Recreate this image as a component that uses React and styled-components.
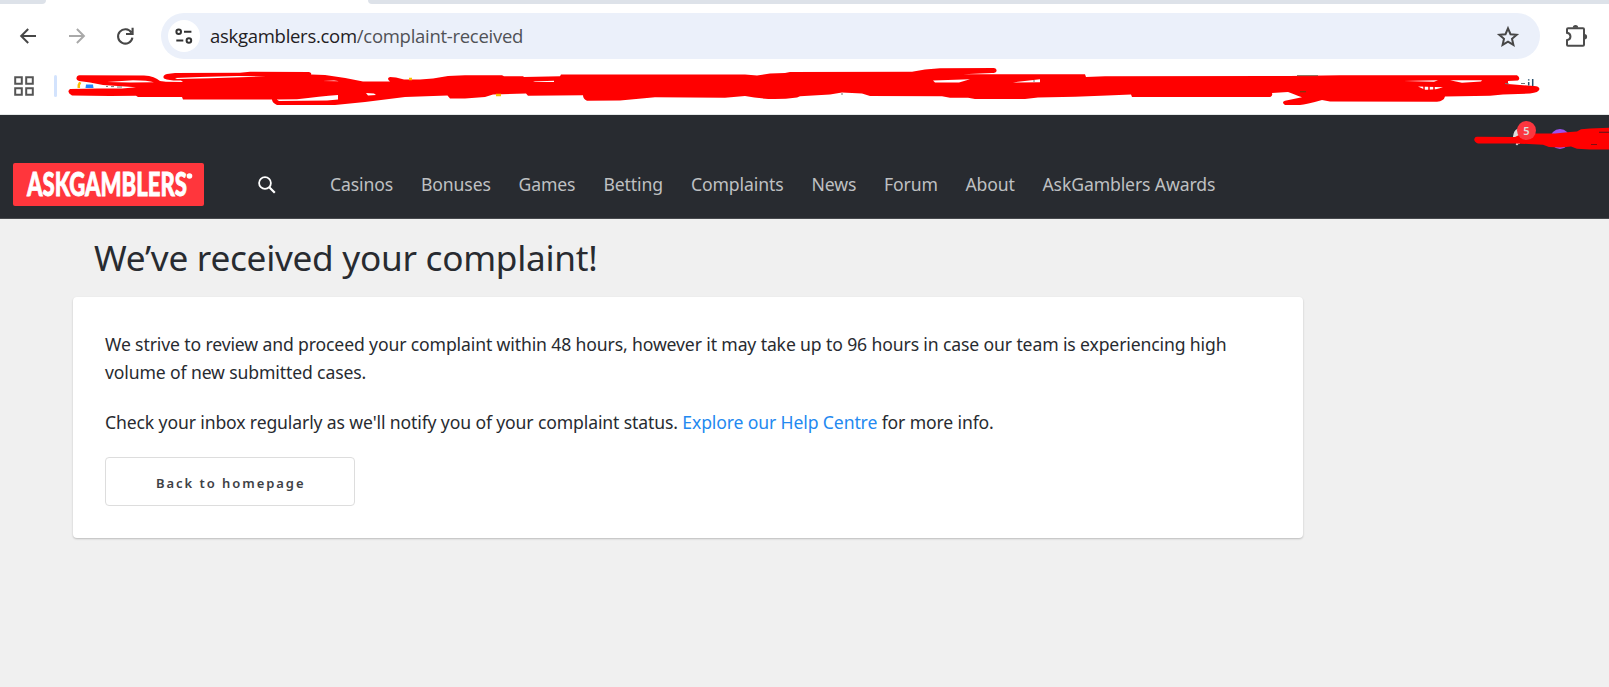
import React from "react"
import styled, { createGlobalStyle } from "styled-components"

const links = [
  { name: "Casinos", width: 91 },
  { name: "Bonuses", width: 97.5 },
  { name: "Games", width: 85 },
  { name: "Betting", width: 87.5 },
  { name: "Complaints", width: 120.5 },
  { name: "News", width: 72.5 },
  { name: "Forum", width: 81.5 },
  { name: "About", width: 77 },
  { name: "AskGamblers Awards", width: 180 },
]

function BrowserBar() {
  return (
    <div>
      <TabStrip>
        <TabEdge $width="46px" $radius="0 0 6px 0" />
        <TabEdge $width="1241px" $radius="0 0 0 6px" />
      </TabStrip>
      <Toolbar>
        <NavButtons>
          <svg width="17" height="16" viewBox="0 0 17 16" fill="none" stroke="#474747" strokeWidth="2">
            <path d="M16 8H1.4M8.2 1L1.2 8l7 7" />
          </svg>
          <svg width="17" height="16" viewBox="0 0 17 16" fill="none" stroke="#a9a9a9" strokeWidth="2">
            <path d="M0 8h14.7M7.9 1l7 7-7 7" />
          </svg>
          <svg width="18" height="18" viewBox="0 0 18 18" fill="none" stroke="#474747" strokeWidth="2.1">
            <path d="M14.4 5.6A7.2 7.2 0 1 0 15.4 10.6M15.6 0.8v6.2H9" />
          </svg>
        </NavButtons>
        <AddressBar>
          <SiteInfo>
            <svg width="18" height="16" viewBox="0 0 18 16" fill="none" stroke="#333" strokeWidth="2">
              <circle cx="3.7" cy="3.7" r="2.3" />
              <path d="M9 3.7h7.4M1.3 12.5h7" />
              <circle cx="13.9" cy="12.5" r="2.3" />
            </svg>
          </SiteInfo>
          <Url>askgamblers.com<span>/complaint-received</span></Url>
          <svg width="22" height="21" viewBox="0 0 22 21" fill="none" stroke="#474747" strokeWidth="2">
            <path d="M12 2.4l2.5 5.8 6.2.5-4.7 4.1 1.4 6.1-5.4-3.2-5.4 3.2 1.4-6.1-4.7-4.1 6.2-.5z" />
          </svg>
        </AddressBar>
        <svg width="24" height="24" viewBox="0 0 24 24" fill="none" stroke="#4c4c4c" strokeWidth="2">
          <path d="M4 4.2h15a1 1 0 0 1 1 1v15.6a1 1 0 0 1-1 1H4a1 1 0 0 1-1-1v-4.6c4.6-.8 4.6-6.6 0-7.4V5.2a1 1 0 0 1 1-1z" />
          <path d="M8.8 3.8a2.7 2.7 0 0 1 5.4 0zM20.4 10a2.7 2.7 0 0 1 0 5.4z" fill="#4c4c4c" stroke="none" />
        </svg>
      </Toolbar>
      <Bookmarks>
        <svg width="20" height="20" viewBox="0 0 20 20" fill="none" stroke="#555" strokeWidth="2">
          <path d="M1.2 1.2h6.6v6.6H1.2zM12.2 1.2h6.6v6.6h-6.6zM1.2 12.2h6.6v6.6H1.2zM12.2 12.2h6.6v6.6h-6.6z" />
        </svg>
        <Divider />
      </Bookmarks>
    </div>
  )
}

// freehand marker strokes lying over the bookmarks and the account area
function Marker() {
  return (
    <MarkerLayer width="1609" height="90" viewBox="0 65 1609 90">
      <path
        fill="#f00"
        d="M76.5 78Q77 75 80 75.3L144 75.4Q155 76 160 81L166 81.7 183 82 181 80.5Q170 81 164 78.5Q162 75.5 167 74L175 73 240 72.8 250 71.8 309 72Q312 73 311 74.6L325 75Q345 77.5 363 81.6L390 81.6Q386 78 390 77L396 77.5 404 79.5 420 79.5 433 78.5 448 76 465 75.3 502 75.3 504 76.3 523 76.3 524 77 560 76.3 561 74.5 745 74.5 757 75.5 770 73.6 785 73 790 71.9 912 71.8 925 69.6 940 68.2 994 68Q997 68.5 996.5 71Q996 73 992 73L963 74.3 1085 74.3 1086 77 1105 76.2 1290 76 1340 75.3 1517 75.3Q1521 78 1518 80.6L1508 81 1508 84 1534 86Q1539 86 1539.5 89Q1539 92.5 1530 93.5L1503 94.5 1490 95.8 1445 96.5Q1444 101 1437 101.8L1330 101.5 1322 100Q1306 104.7 1300 105L1285 105Q1281 102 1285 100.7L1302 97.3Q1293 94 1288 92L1272 93Q1273 96 1270 97L1132 97 1131 94.5 1107 95.5 1075 96.7 1038 97.5 1025 99 975 99 968 97.8 950 97.8 942 96.3 870 96 862 93.5 842 92.5 830 94.5 800 96.3 797 97.4Q770 101 745 96L725 97.8 655 97.3 620 100.5 587 100.8Q583 99 583 95.3L528 95.8 526 93.5 493 94.5 485 97 465 98.6 450 98.6 447.5 95.5 405 97 365 102 335 105 277 105Q272 103 272 99.6L183 99.6 182 97 138 97 136 95.7 110 96 72 95.5Q66 92 70 89L98 88.6 122 88.4 136 87.2 103 85 90 82.4 79 81Q76 80 76.5 78Z"
      />
      <path
        fill="#fff"
        d="M107 82L133 80.3Q148 80.5 154 82.2L130 82.4zM175 78L200 77 237 76 266 76.3 210 78.2 177 79zM323 81L334 80.5 340 81.2zM276.7 99.6L297 99.3Q320 96.5 338 95L338 99.4 327 100.5 279 101zM366 93L374 93.5 376 95 368 95.5zM533 81.6L554 80.8 554 82 535 82zM933 80.6L970 79.3 959 82.4 935 82.4zM1013 82.4L1040 79.2 1040 82.3zM1404 81.1L1438 80.2 1434 81.8zM1418 86.6L1443 87.2Q1436 90 1425 89.7zM1450 80.3L1482 80.2 1481 81.6 1462 82.7z"
      />
      <path stroke="#f00" strokeWidth="1.5" d="M1424 86v4M1429 86v4M1434 86v4" />
      <path stroke="#777" strokeWidth="1" d="M106 86.4h2M111 86.6h3M117 87h5M842 93v2M1034 80v2M1505 83.5l4 .5M1521 83.5h4" />
      <path stroke="#8a6a55" strokeWidth="1" d="M1297 75.6h21" />
      <path stroke="#7a3a10" strokeWidth="1.2" d="M1300 91.7h6" />
      <path stroke="#28506c" strokeWidth="1.5" d="M1528.7 82v3.5M1532.7 79v7M1528.7 79.3v1.2" />
      <path stroke="#fbbc04" strokeWidth="2.5" fill="none" d="M78.8 88v-3l1.4-2.8M409 79h3M496 95h5" />
      <path fill="#2684fc" d="M86 84.5h7l.5 3.5h-8z" />
      <path
        fill="#f00"
        d="M1477 136.8L1515 137 1520 134.5 1530 133.5 1555 133.6 1570 132 1577 131.6 1581 129.3 1590 128.5 1609 127.7V149.5L1590 149.5 1577 148.7 1571 146.6 1560 147.5 1549 147 1543 144.7 1515 143.4 1478 143.4Q1474 142 1474.3 139Q1475 136.7 1477 136.8Z"
      />
      <path fill="#55161a" d="M1599 131.8h10v.9h-10zM1591 144.2h6v.8h-6z" />
    </MarkerLayer>
  )
}

function App() {
  return (
    <Page>
      <GlobalStyle />
      <BrowserBar />
      <Header>
        <AccountBar>
          <Bell width="16" height="20" viewBox="0 0 16 20">
            <path d="M0 14C2 11 0 3 8 2v16H6.5l-1.5 1.5L3.5 18H4v-4z" fill="#ddd" />
          </Bell>
          <Badge>5</Badge>
          <Avatar />
        </AccountBar>
        <MainNav>
          <Logo>
            <svg width="191" height="43" viewBox="0 0 191 43">
              <text x="14" y="33" textLength="160" lengthAdjust="spacingAndGlyphs" fill="#fff" stroke="#fff" strokeWidth="0.8">ASKGAMBLERS</text>
              <circle cx="176.5" cy="13" r="2.8" fill="#fff" />
            </svg>
          </Logo>
          <SearchButton>
            <svg width="18" height="18" viewBox="0 0 18 18" fill="none" stroke="#fff" strokeWidth="1.8">
              <circle cx="7" cy="7" r="5.9" />
              <path d="M11.3 11.3l5.5 5.5" strokeWidth="2.2" />
            </svg>
          </SearchButton>
          {links.map((link) => (
            <NavLink key={link.name} $width={link.width}>{link.name}</NavLink>
          ))}
        </MainNav>
      </Header>
      <Title>We’ve received your complaint!</Title>
      <Card>
        <Text>
          We strive to review and proceed your complaint within 48 hours, however it may take up to 96 hours in case our team is experiencing high
          <br />
          volume of new submitted cases.
        </Text>
        <Text>
          Check your inbox regularly as we'll notify you of your complaint status. <a>Explore our Help Centre</a> for more info.
        </Text>
        <HomeButton>Back to homepage</HomeButton>
      </Card>
      <Marker />
    </Page>
  )
}
export default App

const GlobalStyle = createGlobalStyle`
  body {
    margin: 0;
    background: #f0f0f0;
    overflow: hidden;
  }
  * {
    box-sizing: border-box;
  }
  svg {
    display: block;
    flex-shrink: 0;
    overflow: visible;
  }
`

const Page = styled.div`
  position: relative;
  width: 1609px;
  height: 687px;
  overflow: hidden;
  background: #f0f0f0;
  font-family: "Noto Sans", sans-serif;
  color: #282b30;
`

const TabStrip = styled.div`
  display: flex;
  justify-content: space-between;
  height: 4px;
  background: #fff;
`

const TabEdge = styled.div`
  width: ${(props) => props.$width};
  background: #dde2e9;
  border-radius: ${(props) => props.$radius};
`

const Toolbar = styled.div`
  display: flex;
  align-items: center;
  height: 64px;
  padding: 0 20px 0 20px;
  background: #fff;
`

const NavButtons = styled.div`
  display: flex;
  align-items: center;
  gap: 31.5px;
  width: 141px;
`

const AddressBar = styled.div`
  display: flex;
  align-items: center;
  width: 1379px;
  height: 46px;
  margin-right: 24px;
  padding: 0 22px 0 7px;
  border-radius: 23px;
  background: #ebf0fa;
`

const SiteInfo = styled.div`
  display: flex;
  align-items: center;
  justify-content: center;
  width: 32px;
  height: 32px;
  border-radius: 50%;
  background: #fff;
`

const Url = styled.div`
  flex: 1;
  margin-left: 10px;
  font-family: "Open Sans", sans-serif;
  font-size: 18.5px;
  line-height: 26px;
  letter-spacing: -0.28px;
  color: #1f2023;
  span {
    color: #505256;
  }
`

const Bookmarks = styled.div`
  display: flex;
  align-items: center;
  gap: 20px;
  height: 47px;
  padding: 0 0 11px 13.5px;
  background: #fff;
  border-bottom: 1.5px solid #e4e8e8;
`

const Divider = styled.div`
  width: 3px;
  height: 22px;
  border-radius: 2px;
  background: #d3e3fd;
`

const Header = styled.div`
  height: 104px;
  background: #282b30;
  border-bottom: 1px solid #47494d;
`

const AccountBar = styled.div`
  display: flex;
  align-items: flex-start;
  justify-content: flex-end;
  height: 35px;
  padding: 6px 39px 0 0;
`

const Bell = styled.svg`
  margin: 5px -11px 0 0;
`

const Badge = styled.div`
  z-index: 1;
  width: 19px;
  height: 19px;
  margin-right: 14px;
  border-radius: 50%;
  background: #fb363f;
  color: #ddd;
  font-size: 11px;
  font-weight: 600;
  line-height: 19px;
  text-align: center;
`

const Avatar = styled.div`
  width: 20px;
  height: 20px;
  margin-top: 8px;
  border-radius: 50%;
  background: #9b51f0;
`

const MainNav = styled.div`
  display: flex;
  align-items: center;
  height: 69px;
  padding-left: 13px;
`

const Logo = styled.div`
  border-radius: 2px;
  background: #ff363c;
  text {
    font-family: Lato, sans-serif;
    font-size: 32px;
    font-weight: 900;
  }
`

const SearchButton = styled.div`
  width: 126px;
  padding-left: 54px;
`

const NavLink = styled.a`
  width: ${(props) => props.$width}px;
  padding-bottom: 2px;
  color: #bfc0c2;
  font-size: 17.6px;
  line-height: 24px;
  letter-spacing: -0.12px;
  white-space: nowrap;
`

const Title = styled.h1`
  margin: 0;
  padding: 13px 0 0 94px;
  height: 78px;
  font-size: 35.2px;
  font-weight: 400;
  line-height: 50px;
  letter-spacing: -0.28px;
`

const Card = styled.div`
  width: 1230px;
  height: 241px;
  margin-left: 73px;
  padding: 33px 32px;
  border-radius: 4px;
  background: #fff;
  box-shadow: 0 1px 2px rgba(0, 0, 0, 0.22);
`

const Text = styled.p`
  margin: 0 0 21.5px;
  font-size: 17.6px;
  line-height: 28px;
  letter-spacing: -0.13px;
  white-space: nowrap;
  a {
    color: #2389f0;
  }
`

const HomeButton = styled.button`
  display: block;
  width: 249.5px;
  height: 49px;
  padding: 2px 0 0 2px;
  border: 1px solid #ddd;
  border-radius: 4px;
  background: #fff;
  color: #3e4145;
  font-family: "Noto Sans", sans-serif;
  font-size: 13px;
  font-weight: 600;
  letter-spacing: 1.95px;
`

const MarkerLayer = styled.svg`
  position: absolute;
  top: 65px;
  left: 0;
`
